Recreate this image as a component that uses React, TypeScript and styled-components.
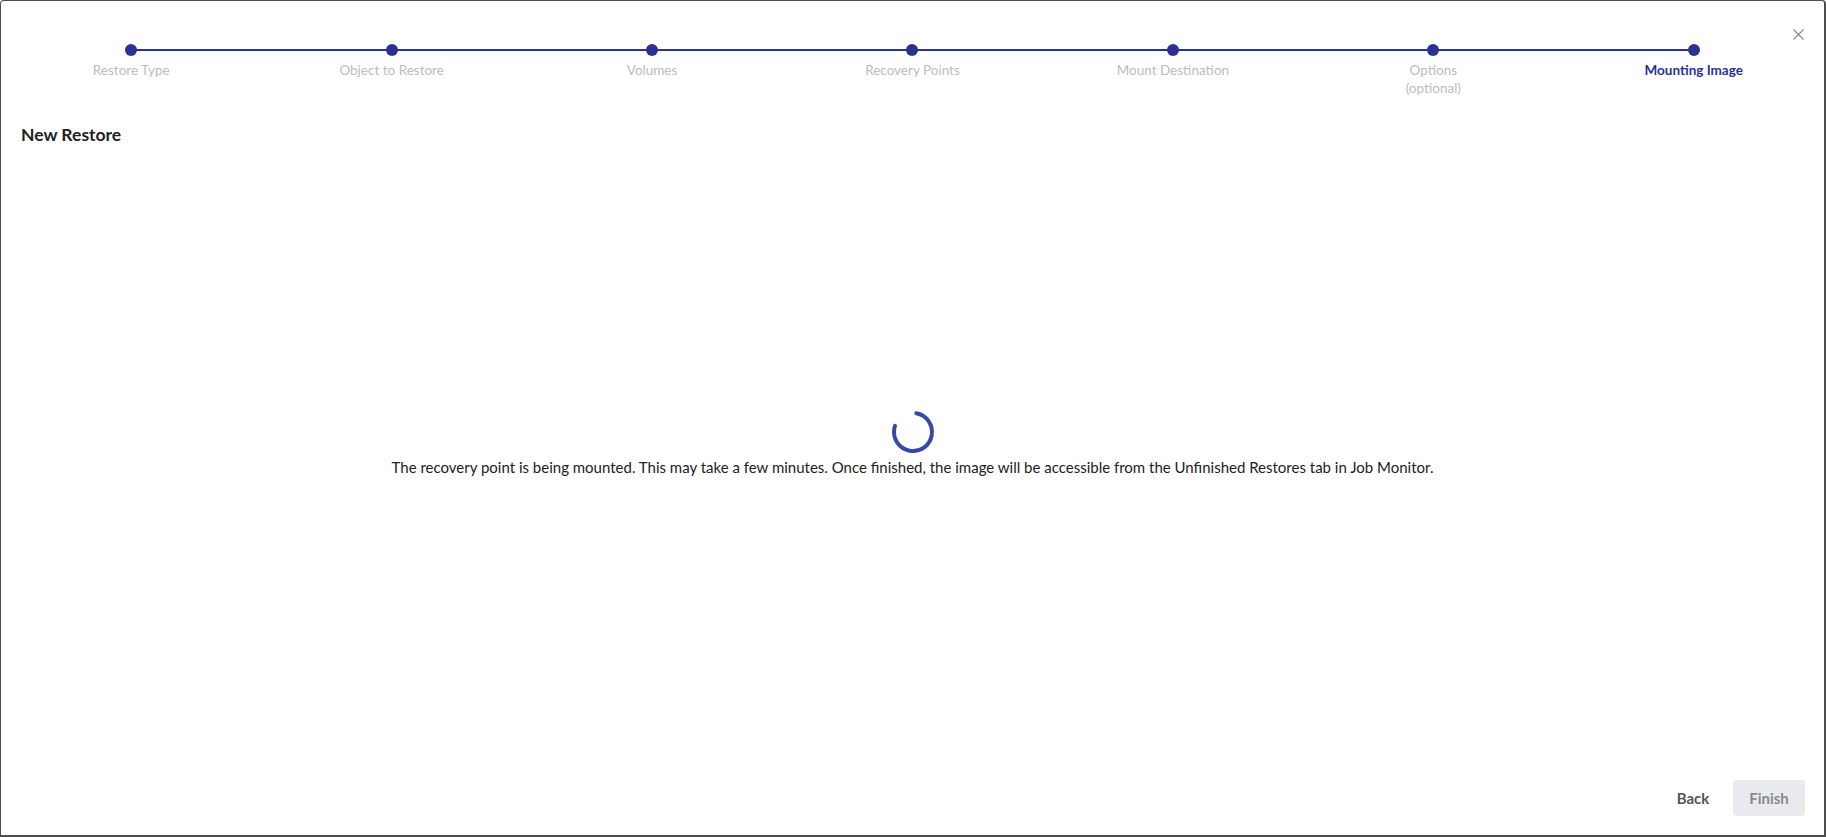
import React from "react";
import styled, { createGlobalStyle } from "styled-components";

const GlobalStyle = createGlobalStyle`
  html, body {
    margin: 0;
    padding: 0;
    background: #ffffff;
  }
  body {
    font-family: Lato, "Noto Sans", "Liberation Sans", sans-serif;
    color: #222222;
  }
  * {
    box-sizing: border-box;
  }
`;

const Frame = styled.div`
  position: relative;
  display: flex;
  flex-direction: column;
  width: 100vw;
  height: 100vh;
  border-style: solid;
  border-color: #4d4d4d;
  border-width: 1px 2px 2px 1px;
  border-radius: 4px 4px 0 0;
  background: #fff;
`;

const CloseButton = styled.button`
  position: absolute;
  top: 22px;
  right: 15px;
  width: 22px;
  height: 22px;
  padding: 0;
  border: none;
  background: transparent;
  display: flex;
  align-items: center;
  justify-content: center;
  cursor: pointer;
`;

const Stepper = styled.ol`
  position: relative;
  display: flex;
  margin: 43px 0 0;
  padding: 0;
  list-style: none;

  /* connecting rail between first and last dot */
  &::before {
    content: "";
    position: absolute;
    top: 5px;
    left: calc(100% / 14);
    right: calc(100% / 14);
    height: 2px;
    background: #2b3190;
  }
`;

const Step = styled.li`
  position: relative;
  flex: 1 1 0;
  display: flex;
  flex-direction: column;
  align-items: center;
  gap: 5px;
`;

const Dot = styled.span`
  width: 12px;
  height: 12px;
  border-radius: 50%;
  background: #2b3190;
  position: relative;
  z-index: 1;
`;

const StepLabel = styled.span<{ $active?: boolean }>`
  font-size: 13.5px;
  line-height: 18px;
  text-align: center;
  color: ${(p) => (p.$active ? "#2b3190" : "#bcbcbc")};
  font-weight: ${(p) => (p.$active ? 700 : 400)};
`;

const Title = styled.h2`
  margin: 27px 0 0 20px;
  font-size: 17.5px;
  line-height: 22px;
  font-weight: 700;
  color: #222;
`;

const Body = styled.div`
  flex: 1;
  display: flex;
  flex-direction: column;
  align-items: center;
  justify-content: center;
  gap: 2px;
  padding-bottom: 40px;
`;

const Spinner = styled.svg`
  width: 46px;
  height: 46px;
`;

const Message = styled.p`
  margin: 0;
  font-size: 15px;
  line-height: 20px;
  color: #222;
`;

const Footer = styled.div`
  display: flex;
  justify-content: flex-end;
  gap: 4px;
  padding: 0 19px 19px 0;
`;

const Button = styled.button<{ $filled?: boolean }>`
  width: 72px;
  height: 36px;
  border: none;
  border-radius: 4px;
  font-family: inherit;
  font-size: 15px;
  font-weight: 700;
  cursor: pointer;
  background: ${(p) => (p.$filled ? "#e8eaed" : "transparent")};
  color: ${(p) => (p.$filled ? "#8a8a8a" : "#555")};
`;

const steps = [
  "Restore Type",
  "Object to Restore",
  "Volumes",
  "Recovery Points",
  "Mount Destination",
  "Options\n(optional)",
  "Mounting Image",
];

export default function App() {
  return (
    <>
      <GlobalStyle />
      <Frame>
        <CloseButton aria-label="Close">
          <svg width="11" height="11" viewBox="0 0 11 11">
            <path d="M0.5 0.5 L10.5 10.5 M10.5 0.5 L0.5 10.5" stroke="#8a8a8a" strokeWidth="1.1" />
          </svg>
        </CloseButton>
        <Stepper>
          {steps.map((s, i) => (
            <Step key={s}>
              <Dot />
              <StepLabel $active={i === steps.length - 1}>
                {s.split("\n").map((line) => (
                  <div key={line}>{line}</div>
                ))}
              </StepLabel>
            </Step>
          ))}
        </Stepper>
        <Title>New Restore</Title>
        <Body>
          <Spinner viewBox="0 0 46 46">
            <circle
              cx="23"
              cy="23"
              r="19"
              fill="none"
              stroke="#3b47a6"
              strokeWidth="4"
              strokeLinecap="round"
              strokeDasharray="92 200"
              transform="rotate(-80 23 23)"
            />
          </Spinner>
          <Message>
            The recovery point is being mounted. This may take a few minutes. Once finished, the image will be accessible from the Unfinished Restores tab in Job Monitor.
          </Message>
        </Body>
        <Footer>
          <Button>Back</Button>
          <Button $filled>Finish</Button>
        </Footer>
      </Frame>
    </>
  );
}
